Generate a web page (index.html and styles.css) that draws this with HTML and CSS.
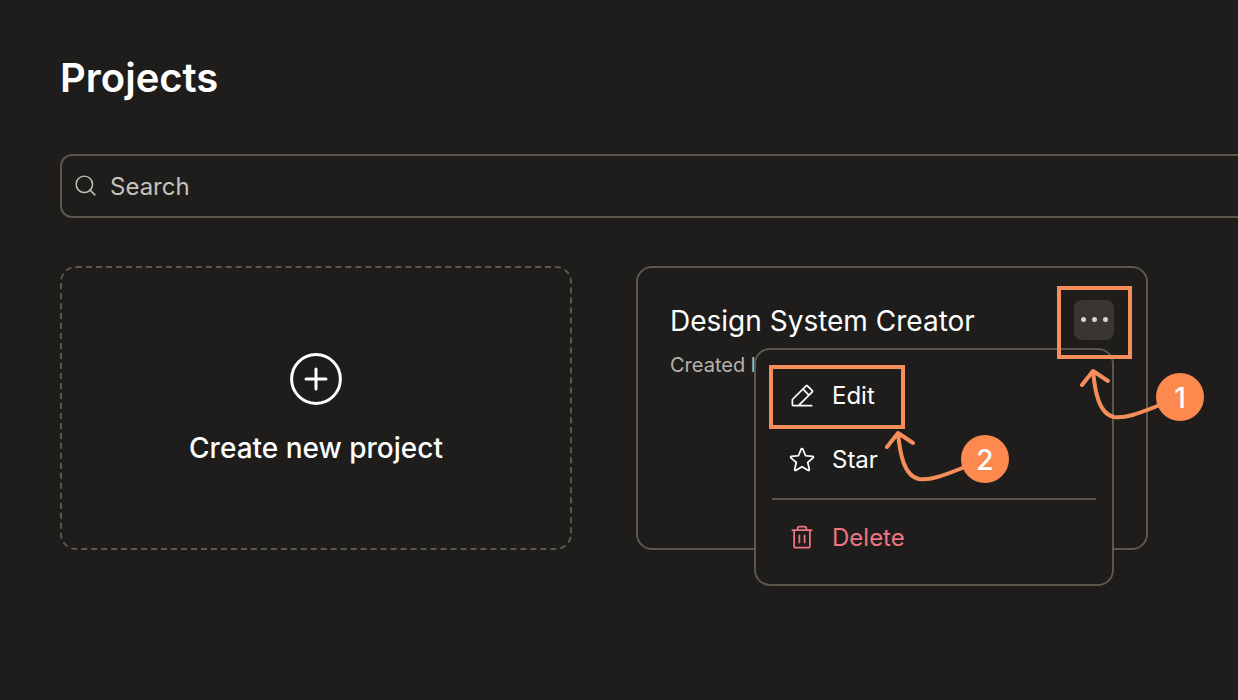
FILE: index.html
```html
<!DOCTYPE html>
<html lang="en">
<head>
    <meta charset="UTF-8">
    <meta name="viewport" content="width=device-width, initial-scale=1.0">
    <title>Projects</title>
    <link rel="stylesheet" href="styles.css">
</head>
<body>
    <main class="page">
        <h1 class="title">Projects</h1>

        <div class="search">
            <svg class="search-icon" viewBox="0 0 256 256">
                <circle cx="116" cy="116" r="84"/>
                <path d="M175.4 175.4 224 224"/>
            </svg>
            <span>Search</span>
        </div>

        <div class="projects">
            <div class="card new-project">
                <svg class="plus-icon" viewBox="0 0 64 64">
                    <circle cx="32" cy="32" r="24.4"/>
                    <path d="M22 32h20M32 22v20"/>
                </svg>
                <span>Create new project</span>
            </div>

            <div class="card project">
                <div class="project-head">
                    <h2 class="project-name">Design System Creator</h2>
                    <button class="more">
                        <span class="dot"></span>
                        <span class="dot"></span>
                        <span class="dot"></span>
                    </button>
                </div>
                <p class="created">Created less than a minute ago</p>

                <div class="menu">
                    <div class="menu-item">
                        <svg class="icon" viewBox="0 0 256 256"><path d="M227.31,73.37,182.63,28.68a16,16,0,0,0-22.63,0L36.69,152A15.86,15.86,0,0,0,32,163.31V208a16,16,0,0,0,16,16H216a8,8,0,0,0,0-16H115.32l112-112A16,16,0,0,0,227.31,73.37ZM92.69,208H48V163.31l88-88L180.69,120ZM192,108.68,147.31,64l24-24L216,84.68Z"/></svg>
                        <span class="label">Edit</span>
                    </div>
                    <div class="menu-item">
                        <svg class="icon" viewBox="0 0 256 256"><path d="M239.18,97.26A16.38,16.38,0,0,0,224.92,86l-59-4.76L143.14,26.15a16.36,16.36,0,0,0-30.27,0L90.11,81.23,31.08,86a16.46,16.46,0,0,0-9.37,28.86l45,38.83L53,211.75a16.38,16.38,0,0,0,24.5,17.82L128,198.49l50.53,31.08A16.4,16.4,0,0,0,203,211.75l-13.76-58.07,45-38.83A16.43,16.43,0,0,0,239.18,97.26Zm-15.34,5.47-48.7,42a8,8,0,0,0-2.56,7.91l14.88,62.8a.37.37,0,0,1-.17.48c-.18.14-.23.11-.38,0l-54.72-33.65a8,8,0,0,0-8.38,0L69.09,215.94c-.15.09-.19.12-.38,0a.37.37,0,0,1-.17-.48l14.88-62.8a8,8,0,0,0-2.56-7.91l-48.7-42c-.12-.1-.23-.19-.13-.5s.18-.27.33-.29l63.92-5.16A8,8,0,0,0,103,91.86l24.62-59.61c.08-.17.11-.25.35-.25s.27.08.35.25L153,91.86a8,8,0,0,0,6.75,4.92l63.92,5.16c.15,0,.24,0,.33.29S224,102.63,223.84,102.73Z"/></svg>
                        <span class="label">Star</span>
                    </div>
                    <div class="separator"></div>
                    <div class="menu-item danger">
                        <svg class="icon" viewBox="0 0 256 256"><path d="M216,48H176V40a24,24,0,0,0-24-24H104A24,24,0,0,0,80,40v8H40a8,8,0,0,0,0,16h8V208a16,16,0,0,0,16,16H192a16,16,0,0,0,16-16V64h8a8,8,0,0,0,0-16ZM96,40a8,8,0,0,1,8-8h48a8,8,0,0,1,8,8v8H96Zm96,168H64V64H192ZM112,104v64a8,8,0,0,1-16,0V104a8,8,0,0,1,16,0Zm48,0v64a8,8,0,0,1-16,0V104a8,8,0,0,1,16,0Z"/></svg>
                        <span class="label">Delete</span>
                    </div>
                </div>
            </div>
        </div>
    </main>

    <!-- step 1: open the menu -->
    <div class="highlight highlight-more"></div>
    <div class="step step-one">
        <svg class="arrow" viewBox="0 0 84 56">
            <path d="M2 17 13 3 28 13M13 3C15 24 19 46 34 49C46 51 62 44 80 37"/>
        </svg>
        <span class="number">1</span>
    </div>

    <!-- step 2: pick Edit -->
    <div class="highlight highlight-edit"></div>
    <div class="step step-two">
        <svg class="arrow" viewBox="0 0 84 56">
            <path d="M2 17 13 3 28 13M13 3C15 24 19 46 34 49C46 51 62 44 80 37"/>
        </svg>
        <span class="number">2</span>
    </div>
</body>
</html>
```
FILE: styles.css
```css
* {
    box-sizing: border-box;
}
body {
    margin: 0;
    height: 700px;
    position: relative;
    background-color: #1e1d1b;
    color: #fff;
    font-family: Inter, sans-serif;
}
.page {
    padding: 54px 0 0 60px;
}
.title {
    margin: 0 0 52px;
    font-size: 40px;
    line-height: 48px;
    font-weight: 600;
}
.search {
    display: flex;
    align-items: center;
    gap: 12px;
    height: 64px;
    padding: 0 11px;
    border: 2px solid #5b574d;
    border-right: none;
    border-radius: 12px 0 0 12px;
    color: #c5c2bb;
    font-size: 24px;
}
.search-icon {
    width: 25px;
    height: 25px;
    margin-bottom: 1px;
    fill: none;
    stroke: #c5c2bb;
    stroke-width: 15;
    stroke-linecap: round;
}
.projects {
    display: flex;
    gap: 64px;
    margin-top: 48px;
}
.card {
    width: 512px;
    height: 284px;
    border: 2px solid #5b574d;
    border-radius: 16px;
}
.new-project {
    display: flex;
    flex-direction: column;
    align-items: center;
    padding-top: 79px;
    gap: 19px;
    border-style: dashed;
    font-size: 28px;
    line-height: 36px;
    font-weight: 500;
}
.plus-icon {
    width: 64px;
    height: 64px;
    fill: none;
    stroke: #fff;
    stroke-width: 3;
    stroke-linecap: round;
}
.project {
    position: relative;
    padding: 32px;
}
.project-head {
    display: flex;
    justify-content: space-between;
    align-items: center;
    height: 40px;
}
.project-name {
    margin: 2px 0 0;
    font-size: 28px;
    font-weight: 400;
}
.more {
    display: flex;
    justify-content: center;
    align-items: center;
    gap: 6px;
    width: 40px;
    height: 40px;
    padding: 0;
    border: none;
    border-radius: 8px;
    background-color: #393530;
}
.dot {
    width: 5px;
    height: 5px;
    margin-bottom: 1px;
    border-radius: 50%;
    background-color: #d6d3cd;
}
.created {
    margin: 11px 0 0;
    color: #b5b2ac;
    font-size: 20px;
    line-height: 28px;
}
.menu {
    position: absolute;
    top: 80px;
    left: 116px;
    width: 360px;
    height: 238px;
    padding: 14px 16px;
    border: 2px solid #5b574d;
    border-radius: 16px;
    background-color: #1e1d1b;
}
.menu-item {
    display: flex;
    align-items: center;
    gap: 16px;
    height: 64px;
    padding-left: 16px;
    font-size: 24px;
}
.label {
    margin-bottom: 2px;
}
.icon {
    width: 28px;
    height: 28px;
    fill: currentColor;
}
.separator {
    height: 2px;
    margin: 6px 0;
    background-color: #5b574d;
}
.danger {
    color: #ef7482;
}
.highlight {
    position: absolute;
    border: 4px solid #f58e5a;
}
.highlight-more {
    top: 286px;
    left: 1057px;
    width: 75px;
    height: 73px;
}
.highlight-edit {
    top: 365px;
    left: 769px;
    width: 136px;
    height: 64px;
}
.step {
    position: absolute;
    display: flex;
    align-items: flex-start;
}
.step-one {
    top: 368px;
    left: 1080px;
}
.step-two {
    top: 430px;
    left: 885px;
}
.arrow {
    width: 84px;
    height: 56px;
    margin-right: -8px;
    fill: none;
    stroke: #f58e5a;
    stroke-width: 4;
    stroke-linecap: round;
    stroke-linejoin: round;
}
.number {
    display: flex;
    justify-content: center;
    align-items: center;
    width: 48px;
    height: 48px;
    margin-top: 5px;
    padding-top: 2px;
    border-radius: 50%;
    background-color: #fc8a4e;
    font-size: 28px;
    font-weight: 500;
}
```
